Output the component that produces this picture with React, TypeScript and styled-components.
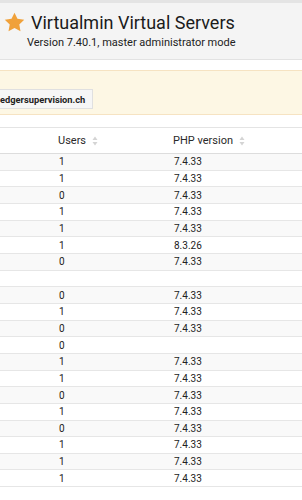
import styled, { createGlobalStyle } from 'styled-components';

const GlobalStyle = createGlobalStyle`
    body {
        margin: 0;
        background: #ffffff;
        font-family: Roboto, "Liberation Sans", sans-serif;
        color: #333333;
        overflow: hidden;
    }
`;

const rows: [string, string][] = [
    ['1', '7.4.33'],
    ['1', '7.4.33'],
    ['0', '7.4.33'],
    ['1', '7.4.33'],
    ['1', '7.4.33'],
    ['1', '8.3.26'],
    ['0', '7.4.33'],
    ['', ''],
    ['0', '7.4.33'],
    ['1', '7.4.33'],
    ['0', '7.4.33'],
    ['0', ''],
    ['1', '7.4.33'],
    ['1', '7.4.33'],
    ['0', '7.4.33'],
    ['1', '7.4.33'],
    ['0', '7.4.33'],
    ['1', '7.4.33'],
    ['1', '7.4.33'],
    ['1', '7.4.33'],
];

const Star = () => (
    <svg width="21" height="20" viewBox="0 0 24 23">
        <path
            d="M12 0.8l3.4 7.1 7.8 1-5.7 5.4 1.4 7.7L12 18.3l-6.9 3.7 1.4-7.7L0.8 8.9l7.8-1z"
            fill="#f0a13a"
        />
    </svg>
);

const SortIcon = () => (
    <svg width="6" height="10" viewBox="0 0 6 10">
        <path d="M3 0.5L5.5 4H0.5z" fill="#d4d4d4" />
        <path d="M3 9.5L5.5 6H0.5z" fill="#d4d4d4" />
    </svg>
);

export default function App() {
    return (
        <>
            <GlobalStyle />
            <Header>
                <TitleRow>
                    <Star />
                    <Title>Virtualmin Virtual Servers</Title>
                </TitleRow>
                <Subtitle>Version 7.40.1, master administrator mode</Subtitle>
            </Header>
            <Alert>
                <DomainButton>edgersupervision.ch</DomainButton>
            </Alert>
            <Table>
                <HeadRow>
                    <Cell />
                    <HeadCell>Users <SortIcon /></HeadCell>
                    <HeadCell>PHP version <SortIcon /></HeadCell>
                </HeadRow>
                {rows.map(([users, php], i) => (
                    <Row key={i} $striped={i % 2 === 0}>
                        <Cell />
                        <Cell>{users}</Cell>
                        <Cell>{php}</Cell>
                    </Row>
                ))}
            </Table>
        </>
    );
}

const Header = styled.div`
    background: #f4f4f4;
    border-top: 3px solid #e4e4e4;
    border-bottom: 1px solid #e2e2e2;
    box-sizing: border-box;
    height: 60px;
    padding: 8px 0 0 4px;
`;
const TitleRow = styled.div`
    display: flex;
    align-items: center;
    gap: 6px;
    height: 22px;
`;
const Title = styled.div`
    font-size: 18px;
    color: #1b1b1b;
`;
const Subtitle = styled.div`
    font-size: 11px;
    color: #222222;
    margin: 3px 0 0 23px;
`;
const Alert = styled.div`
    margin-top: 10px;
    height: 45px;
    box-sizing: border-box;
    background: #fdf7e4;
    border-top: 1px solid #f6e3c2;
    border-bottom: 1px solid #f6e3c2;
    display: flex;
    align-items: flex-end;
    padding-bottom: 5px;
`;
const DomainButton = styled.div`
    height: 20px;
    box-sizing: border-box;
    display: flex;
    align-items: center;
    white-space: nowrap;
    padding: 0 7px 0 0;
    background: #f6f6f6;
    border: 1px solid #e0e0e0;
    border-left: none;
    font-size: 9.3px;
    font-weight: bold;
    color: #222222;
`;
const Table = styled.div`
    margin-top: 12px;
    border-top: 1px solid #e4e4e4;
`;
const HeadRow = styled.div`
    display: grid;
    grid-template-columns: 54px 115px 1fr;
    height: 26px;
    box-sizing: border-box;
    border-bottom: 1px solid #dddddd;
    align-items: center;
`;
const HeadCell = styled.div`
    display: flex;
    align-items: center;
    gap: 6px;
    padding-left: 4px;
    font-size: 11px;
    color: #2a2a2a;
`;
const Row = styled.div<{ $striped: boolean }>`
    display: grid;
    grid-template-columns: 54px 115px 1fr;
    height: calc(50px / 3);
    box-sizing: border-box;
    border-bottom: 1px solid #e6e6e6;
    background: ${p => (p.$striped ? '#f9f9f9' : '#ffffff')};
    align-items: center;
`;
const Cell = styled.div`
    padding-left: 5px;
    font-size: 10px;
    color: #222222;
`;
